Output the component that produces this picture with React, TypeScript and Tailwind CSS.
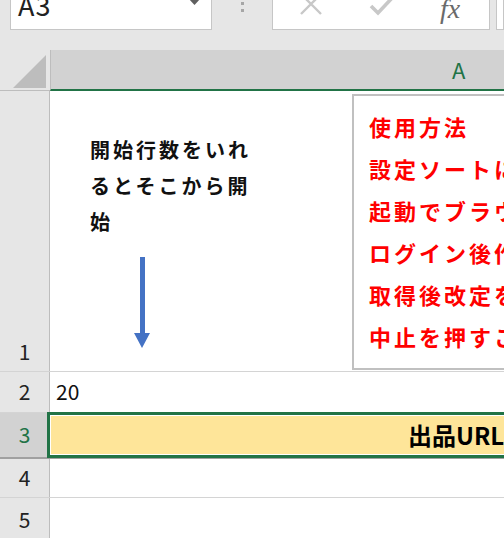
import React from "react";

const JP = '"Noto Sans CJK JP", "Noto Sans", sans-serif';

function RowHeader({ n, selected }: { n: number; selected?: boolean }) {
  return (
    <div
      className={
        "w-[50px] shrink-0 flex items-center justify-center border-r border-[#bdbdbd] text-[21px] " +
        (selected ? "bg-[#d2d2d2] text-[#217346]" : "bg-[#e6e6e6] text-[#222]")
      }
    >
      {n}
    </div>
  );
}

export default function App() {
  return (
    <div
      className="w-[504px] h-[538px] overflow-hidden relative bg-white"
      style={{ fontFamily: JP }}
    >
      {/* Formula bar area */}
      <div className="h-[50px] bg-[#e6e6e6] overflow-hidden">
        <div className="flex items-start mt-[-12px]">
          <div className="ml-[10px] w-[202px] h-[42px] bg-white border border-[#c6c6c6] flex items-start justify-between pl-[7px] pr-[10px]">
            <span className="text-[27px] leading-none text-[#222] mt-[2px] tracking-[1px]">A3</span>
            <svg width="13" height="8" viewBox="0 0 13 8" className="mt-[9px]">
              <path d="M0 0 L13 0 L6.5 7 Z" fill="#606060" />
            </svg>
          </div>
          <div className="w-[60px] h-[42px] flex flex-col items-center pt-[14px] gap-[4px]">
            <div className="w-[3px] h-[3px] bg-[#a6a6a6]" />
            <div className="w-[3px] h-[3px] bg-[#a6a6a6]" />
          </div>
          <div className="w-[218px] h-[42px] bg-white border border-[#c6c6c6] relative">
            <svg width="24" height="24" viewBox="0 0 24 24" className="absolute left-[26px] top-[3px]">
              <path d="M2 2 L22 22 M22 2 L2 22" stroke="#c8c8c8" strokeWidth="2.4" />
            </svg>
            <svg width="26" height="22" viewBox="0 0 26 22" className="absolute left-[96px] top-[5px]">
              <path d="M2 12 L9 19 L24 3" stroke="#c8c8c8" strokeWidth="3.6" fill="none" />
            </svg>
            <span
              className="absolute left-[167px] top-[6px] text-[28px] italic text-[#6a6a6a] leading-none"
              style={{ fontFamily: '"Liberation Serif", serif' }}
            >
              fx
            </span>
          </div>
          <div className="ml-[6px] flex-1 h-[42px] bg-white border border-[#c6c6c6]" />
        </div>
      </div>

      {/* Column header */}
      <div className="flex h-[41px]">
        <div className="w-[50px] shrink-0 bg-[#e6e6e6] border-b border-[#bdbdbd] relative">
          <svg width="50" height="40" viewBox="0 0 50 40" className="absolute left-0 top-0">
            <path d="M13 38 L46 38 L46 5 Z" fill="#bdbdbd" />
          </svg>
        </div>
        <div className="flex-1 bg-[#d2d2d2] border-l border-[#bdbdbd] border-b-[2px] border-b-[#217346] flex items-center pl-[401px] text-[22px] text-[#217346]">
          A
        </div>
      </div>

      {/* Row 1 */}
      <div className="flex h-[281px] border-b border-[#d4d4d4]">
        <div className="w-[50px] shrink-0 bg-[#e6e6e6] border-r border-[#bdbdbd] flex items-end justify-center pb-[4px] text-[21px] text-[#222]">
          1
        </div>
        <div className="flex-1" />
      </div>

      {/* Row 2 */}
      <div className="flex h-[41px] border-b border-[#d4d4d4]">
        <RowHeader n={2} />
        <div className="flex-1 flex items-center pl-[6px] text-[21px] text-[#111]">20</div>
      </div>

      {/* Row 3 */}
      <div className="flex h-[46px] border-b-[2px] border-[#a0a0a0]">
        <RowHeader n={3} selected />
        <div className="flex-1 bg-[#fee599] relative flex items-center pl-[358px] text-[24px] font-bold text-black whitespace-nowrap">
          出品URL
          <div className="absolute left-[-3px] top-[-1px] right-[-20px] bottom-[-1px] border-[3px] border-[#217346]">
            <div className="w-full h-full border border-white" />
          </div>
        </div>
      </div>

      {/* Row 4 */}
      <div className="flex h-[39px] border-b border-[#d4d4d4]">
        <RowHeader n={4} />
        <div className="flex-1" />
      </div>

      {/* Row 5 */}
      <div className="flex h-[45px] border-b border-[#d4d4d4]">
        <RowHeader n={5} />
        <div className="flex-1" />
      </div>

      {/* Text box (no border) */}
      <div className="absolute left-[90px] top-[132px] text-[20px] font-bold text-[#111] leading-[36px] tracking-[3px] whitespace-nowrap">
        開始行数をいれ
        <br />
        るとそこから開
        <br />
        始
      </div>

      {/* Arrow */}
      <svg width="20" height="94" viewBox="0 0 20 94" className="absolute left-[132px] top-[256px]">
        <rect x="8" y="1" width="5" height="78" fill="#4472c4" />
        <path d="M2 77 L18 77 L10 92 Z" fill="#4472c4" />
      </svg>

      {/* Instructions box */}
      <div className="absolute left-[352px] top-[94px] w-[200px] h-[276px] bg-white border-[2px] border-[#c0c0c0] pl-[15px] pt-[9px] text-[22px] font-bold text-[#ff0000] leading-[42px] tracking-[3px] whitespace-nowrap overflow-hidden">
        <div>使用方法</div>
        <div>設定ソートに</div>
        <div>起動でブラウザ</div>
        <div>ログイン後作</div>
        <div>取得後改定を</div>
        <div>中止を押すこ</div>
      </div>
    </div>
  );
}
